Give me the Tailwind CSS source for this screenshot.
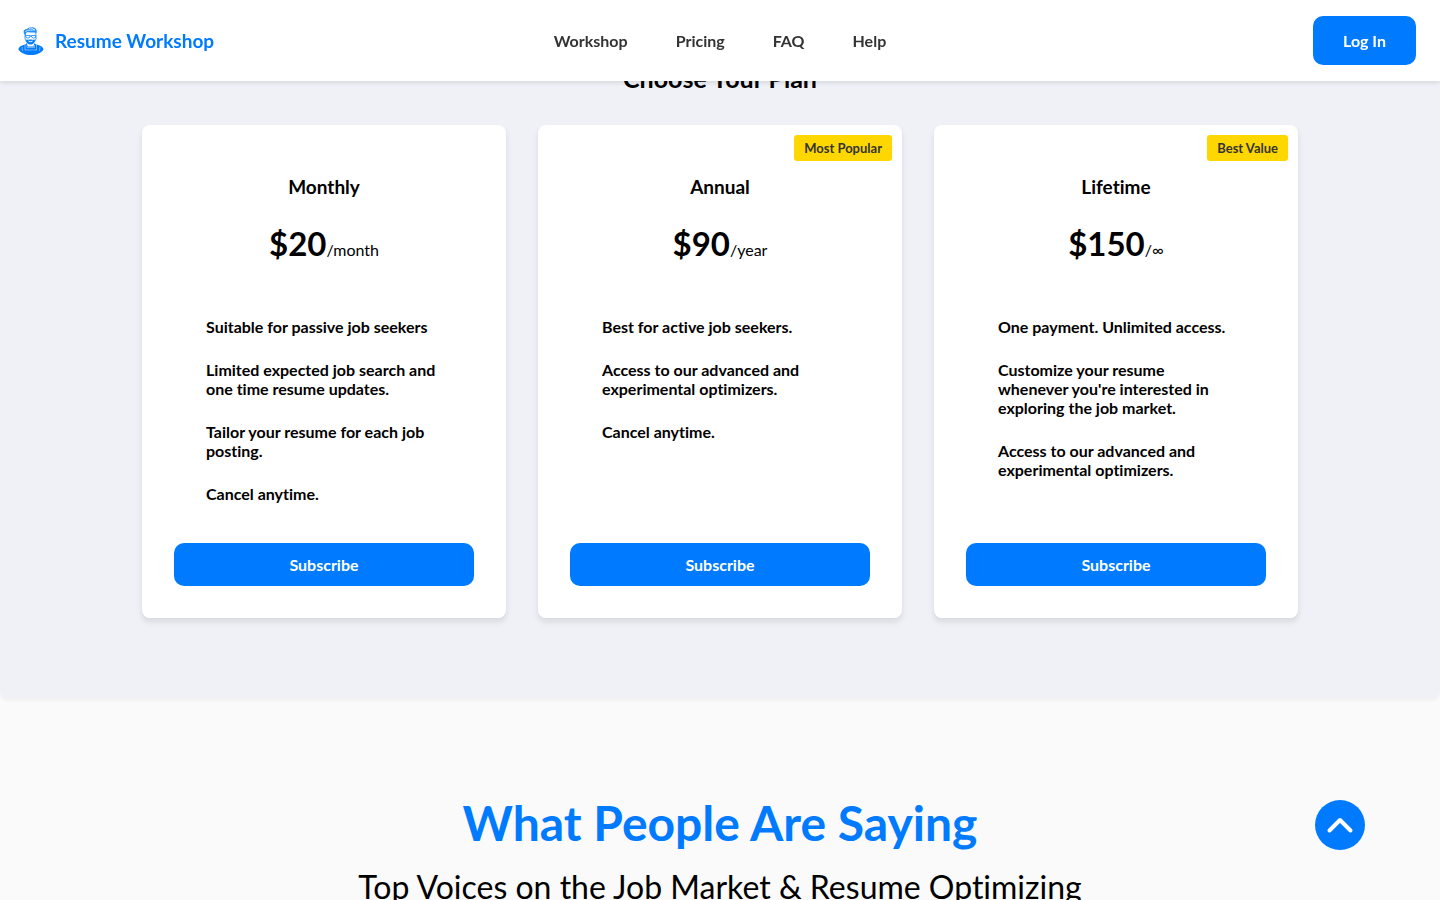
<!DOCTYPE html>
<html lang="en">
<head>
    <meta charset="UTF-8">
    <meta name="viewport" content="width=device-width, initial-scale=1.0">
    <title>Resume Workshop</title>
    <script src="https://cdn.jsdelivr.net/npm/@tailwindcss/browser@4"></script>
</head>
<body class="bg-[#fafafa] font-['Lato',sans-serif] text-black [font-variant-ligatures:none]">
    <!-- Header -->
    <header class="fixed inset-x-0 top-0 z-10 grid grid-cols-[1fr_auto_1fr] items-center bg-white px-[18px] py-4 shadow-[0_2px_4px_rgba(0,0,0,0.1)]">
        <a href="#" class="flex items-center gap-[11px] text-[19px] leading-6 font-bold text-[#007bff]">
            <svg class="h-7 w-[26px]" viewBox="0 0 52 56" fill="none" aria-hidden="true">
                <path d="M13 15C9 9 12 4 18 4C22-1 33 0 36 4C39 8 37 12 36 16L34 11C28 12 22 9 17 11L15 17Z" fill="#007bff" fill-opacity=".85"/>
                <path d="M15 9C21 4 27 8 34 5M22 3C26 1 31 3 33 7" stroke="#fff" stroke-width="1.5"/>
                <path d="M14 15V23C15 29 19 33 25 33C31 33 35 29 36 23V15" stroke="#007bff" stroke-width="1.5"/>
                <path d="M15 17H24V20Q20 24 16 21ZM27 17H35V21Q31 24 27 20ZM24 18H27" stroke="#007bff" stroke-width="1.5"/>
                <path d="M16 25C20 27 22 24 25 25C29 24 31 27 34 25C34 31 30 35 25 35C20 35 16 31 16 25Z" fill="#007bff"/>
                <path d="M21 28Q25 31 29 28" stroke="#fff" stroke-width="2"/>
                <path d="M17 32L15 35C7 36 1 40 1 45C5 52 15 56 26 56C37 56 47 52 51 45C51 40 44 36 36 35L33 32L31 39H20Z" fill="#007bff"/>
                <path d="M14 36V46H37V36M18 36V41H33V36M8 40L9 48M44 40L43 48" stroke="#fff" stroke-width="1.2" opacity=".7"/>
            </svg>
            Resume Workshop
        </a>
        <nav class="flex gap-12 leading-5 font-bold text-[#333]">
            <a href="#workshop">Workshop</a>
            <a href="#pricing">Pricing</a>
            <a href="#faq">FAQ</a>
            <a href="#help">Help</a>
        </nav>
        <button class="mr-1.5 justify-self-end rounded-[10px] bg-[#007bff] px-[30px] py-[15px] leading-[19px] font-bold text-white">Log In</button>
    </header>

    <main>
        <!-- Pricing -->
        <section id="pricing" class="rounded-b-lg bg-[#f0f1f7] px-8 pt-16 pb-20 shadow-[0_2px_4px_rgba(0,0,0,0.05)]">
            <h2 class="mb-8 text-center text-[25px] leading-[29px] font-bold">Choose Your Plan</h2>
            <div class="mx-auto grid max-w-[1156px] grid-cols-3 gap-8">
                <article class="relative flex flex-col rounded-lg bg-white p-8 shadow-[0_4px_6px_rgba(0,0,0,0.1)]">
                    <h3 class="mt-[18px] text-center text-[19px] leading-[23px] font-bold">Monthly</h3>
                    <p class="mt-[25px] text-center leading-10"><span class="text-[33px] font-bold">$20</span>/month</p>
                    <ul class="mt-[47px] flex flex-col gap-6 px-8 pb-10 leading-[19px] font-bold">
                        <li>Suitable for passive job seekers</li>
                        <li>Limited expected job search and one time resume updates.</li>
                        <li>Tailor your resume for each job posting.</li>
                        <li>Cancel anytime.</li>
                    </ul>
                    <button class="mt-auto rounded-[10px] bg-[#007bff] py-3 leading-[19px] font-bold text-white">Subscribe</button>
                </article>
                <article class="relative flex flex-col rounded-lg bg-white p-8 shadow-[0_4px_6px_rgba(0,0,0,0.1)]">
                    <span class="absolute top-2.5 right-2.5 rounded-[3px] bg-[#ffd700] px-2.5 py-[5px] text-[13px] leading-4 font-bold text-[#333]">Most Popular</span>
                    <h3 class="mt-[18px] text-center text-[19px] leading-[23px] font-bold">Annual</h3>
                    <p class="mt-[25px] text-center leading-10"><span class="text-[33px] font-bold">$90</span>/year</p>
                    <ul class="mt-[47px] flex flex-col gap-6 px-8 pb-10 leading-[19px] font-bold">
                        <li>Best for active job seekers.</li>
                        <li>Access to our advanced and experimental optimizers.</li>
                        <li>Cancel anytime.</li>
                    </ul>
                    <button class="mt-auto rounded-[10px] bg-[#007bff] py-3 leading-[19px] font-bold text-white">Subscribe</button>
                </article>
                <article class="relative flex flex-col rounded-lg bg-white p-8 shadow-[0_4px_6px_rgba(0,0,0,0.1)]">
                    <span class="absolute top-2.5 right-2.5 rounded-[3px] bg-[#ffd700] px-2.5 py-[5px] text-[13px] leading-4 font-bold text-[#333]">Best Value</span>
                    <h3 class="mt-[18px] text-center text-[19px] leading-[23px] font-bold">Lifetime</h3>
                    <p class="mt-[25px] text-center leading-10"><span class="text-[33px] font-bold">$150</span>/∞</p>
                    <ul class="mt-[47px] flex flex-col gap-6 px-8 pb-10 leading-[19px] font-bold">
                        <li>One payment. Unlimited access.</li>
                        <li>Customize your resume whenever you're interested in exploring the job market.</li>
                        <li>Access to our advanced and experimental optimizers.</li>
                    </ul>
                    <button class="mt-auto rounded-[10px] bg-[#007bff] py-3 leading-[19px] font-bold text-white">Subscribe</button>
                </article>
            </div>
        </section>

        <!-- Testimonials -->
        <section class="px-8 pt-24 text-center">
            <h2 class="text-5xl leading-[58px] font-bold text-[#007bff]">What People Are Saying</h2>
            <p class="mt-4 text-[32px] leading-[38px]">Top Voices on the Job Market &amp; Resume Optimizing</p>
        </section>
    </main>

    <button aria-label="Back to top" class="fixed right-[75px] bottom-[50px] flex size-[50px] items-center justify-center rounded-full bg-[#007bff]">
        <svg class="size-[30px]" viewBox="0 0 30 30" fill="none" stroke="#fff" stroke-width="4" stroke-linecap="round" stroke-linejoin="round" aria-hidden="true">
            <path d="M4.5 20.5L15 10L25.5 20.5"/>
        </svg>
    </button>
</body>
</html>
